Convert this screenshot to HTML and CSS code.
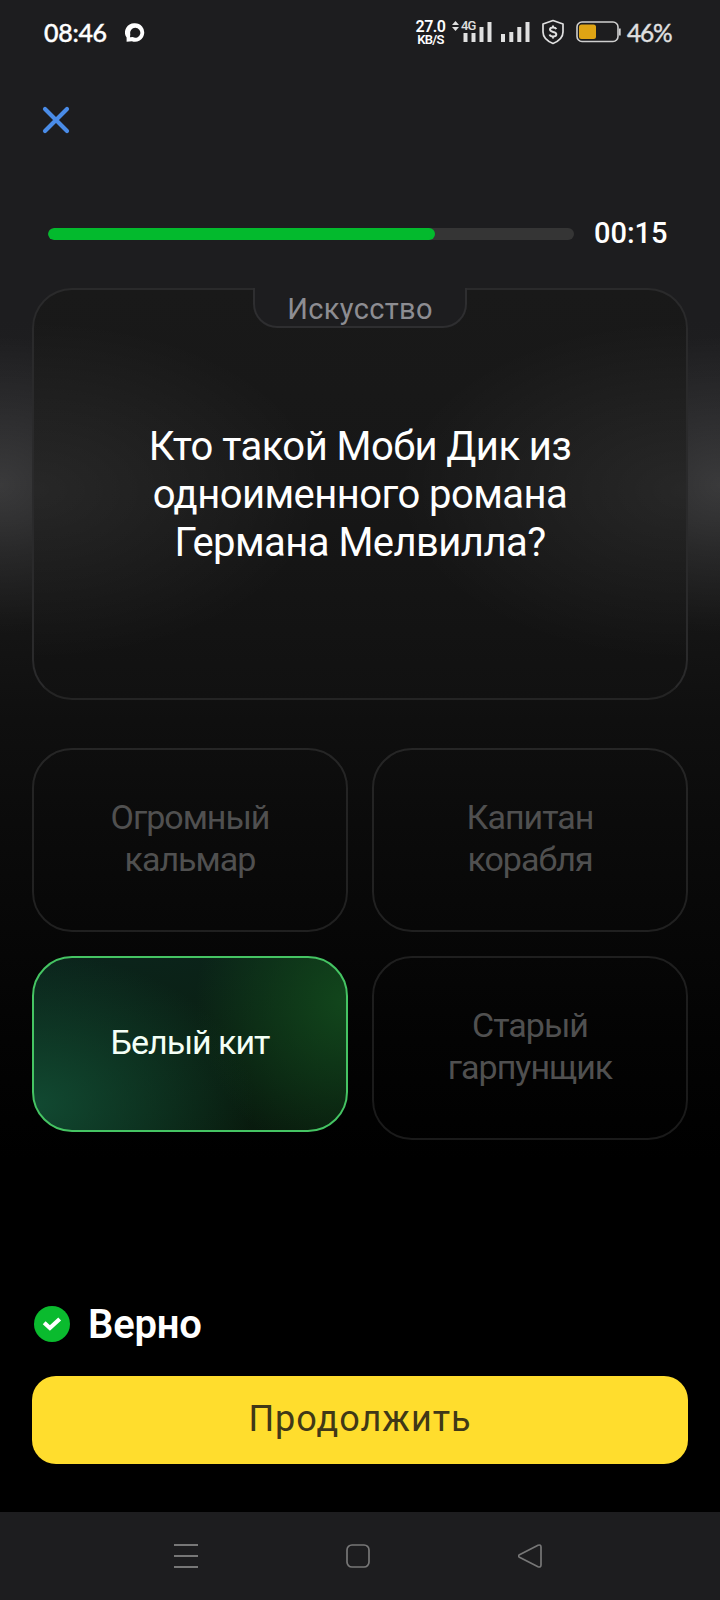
FILE: index.html
```html
<!DOCTYPE html>
<html lang="ru">
<head>
<meta charset="utf-8">
<title>Викторина</title>
<link rel="stylesheet" href="styles.css">
</head>
<body>
<div class="screen">
  <header class="status">
    <span class="clock">08:46</span>
    <svg class="chat" width="20" height="20" viewBox="0 0 20 20"><path fill="#fff" fill-rule="evenodd" d="M10 0.300a9.300 9.200 0 1 1-3.100 17.900L1.600 18.800V14.600A9.300 9.200 0 0 1 10 .3zM10.200 4.800a5 5 0 0 0-4.900 6.200l-.3 3.300 2.800-.2A5 5 0 1 0 10.200 4.800z"/></svg>
    <div class="speed"><span>27.0</span><span>KB/S</span></div>
    <div class="signal">
      <svg width="41" height="24" viewBox="0 0 41 24"><path fill="#e0e0e0" d="M0 5 3.500 1 7 5zM0 7l3.500 4L7 7zM11.500 13h4v9h-4zM19.500 13h4v9h-4zM27.500 7h4v15h-4zM35.500 2h4v20h-4z"/></svg>
      <span class="net">4G</span>
    </div>
    <svg class="bars" width="29" height="20" viewBox="0 0 29 20"><path fill="#e0e0e0" d="M0 12h4v8H0zM8.300 10h4v10h-4zM16.300 5h4v15h-4zM24.500 0h4v20h-4z"/></svg>
    <svg class="shield" width="24" height="26" viewBox="0 0 24 26"><path fill="none" stroke="#e0e0e0" stroke-width="1.700" stroke-linejoin="round" d="M12 1.500 22 5v8c0 5.500-4 9-10 11.500C6 22 2 18.500 2 13V5z"/><path fill="none" stroke="#e0e0e0" stroke-width="2" d="M15.300 10.200c-.5-1.200-1.600-1.700-3.300-1.700-1.800 0-3 .7-3 2.100 0 3.200 6.300 1.400 6.300 4.600 0 1.500-1.400 2.300-3.300 2.300-1.800 0-3-.7-3.400-2M12 6.500v2.200M12 17.300v2.200"/></svg>
    <svg class="battery" width="46" height="22" viewBox="0 0 46 22"><rect x="1" y="1" width="41" height="19.500" rx="5" fill="none" stroke="#cfcfcf" stroke-width="1.600"/><rect x="3" y="3.500" width="17" height="14.500" rx="2.500" fill="#dfa414"/><path d="M43.800 7.500v7" stroke="#cfcfcf" stroke-width="1.800"/></svg>
    <span class="percent">46%</span>
  </header>

  <button class="close" aria-label="Закрыть"><svg width="28" height="28" viewBox="0 0 28 28"><path d="M3 3 25 25M25 3 3 25" stroke="#4a8ce8" stroke-width="4.200" stroke-linecap="round"/></svg></button>

  <div class="timer">
    <div class="track"><div class="fill"></div></div>
    <span class="time">00:15</span>
  </div>

  <section class="question">
    <div class="topic"><span>Искусство</span></div>
    <p>Кто такой Моби Дик из<br>одноименного романа<br>Германа Мелвилла?</p>
  </section>

  <section class="answers">
    <div class="answer"><span>Огромный<br>кальмар</span></div>
    <div class="answer"><span>Капитан<br>корабля</span></div>
    <div class="answer correct"><span>Белый кит</span></div>
    <div class="answer"><span>Старый<br>гарпунщик</span></div>
  </section>

  <div class="result">
    <svg width="36" height="36" viewBox="0 0 36 36"><circle cx="18" cy="18" r="18" fill="#0abb2e"/><path d="M10.200 16.800 15.900 22 25.700 13" fill="none" stroke="#fff" stroke-width="4.200" stroke-linejoin="miter"/></svg>
    <span>Верно</span>
  </div>
  <button class="next"><span>Продолжить</span></button>

  <nav class="navbar">
    <svg width="24" height="24" viewBox="0 0 24 24"><path d="M0 1h24M0 12h24M0 23h24" stroke="#777" stroke-width="2"/></svg>
    <svg width="24" height="24" viewBox="0 0 24 24"><rect x="1" y="1" width="22" height="22" rx="5" fill="none" stroke="#777" stroke-width="1.700"/></svg>
    <svg width="24" height="24" viewBox="0 0 24 24"><path d="M1.500 10.800 20 1.300q3-1 3 1.700v18q0 2.700-3 1.700L1.500 13.200q-2-1.200 0-2.400z" fill="none" stroke="#777" stroke-width="1.700"/></svg>
  </nav>
</div>
</body>
</html>
```
FILE: styles.css
```css
* { box-sizing: border-box; }
body { margin: 0; background: #000; }
.screen {
  width: 720px;
  height: 1600px;
  display: flex;
  flex-direction: column;
  font-family: Roboto, "Noto Sans", sans-serif;
  color: #fff;
  background:
    radial-gradient(ellipse 180px 150px at 0 485px, rgba(255,255,255,.12), rgba(255,255,255,.06) 45%, transparent),
    radial-gradient(ellipse 180px 150px at 720px 485px, rgba(255,255,255,.12), rgba(255,255,255,.06) 45%, transparent),
    linear-gradient(#1d1d1f 0, #1d1d1f 320px, #202022 420px, #1e1e1f 520px, #151515 620px, #0f0f0f 720px, #080808 900px, #030303 1040px, #000 1160px);
}
button { border: 0; padding: 0; background: none; font: inherit; }
svg { display: block; flex: none; }

.status { display: flex; height: 64px; padding-left: 44px; align-items: center; font-family: Lato, sans-serif; }
.clock { width: 81px; font-size: 25px; font-weight: 500; letter-spacing: -.3px; -webkit-text-stroke: .4px #fff; }
.chat { margin-top: 1px; }
.speed { width: 31px; margin-left: 270px; padding-top: 2px; font-family: Roboto, sans-serif; font-weight: 600; text-align: center; white-space: nowrap; }
.speed span { display: block; font-size: 13px; line-height: 13px; letter-spacing: -.7px; }
.speed span:first-child { font-size: 16px; letter-spacing: -.5px; }
.signal { position: relative; margin-left: 6px; }
.net { position: absolute; left: 9px; top: -1px; font: 500 13px/14px Roboto, sans-serif; letter-spacing: -.8px; color: #e0e0e0; }
.bars { margin-left: 8px; }
.shield { margin-left: 11px; }
.battery { margin-left: 11px; }
.percent { margin-left: 5px; font-size: 24.500px; letter-spacing: -1.200px; color: #e0e0e0; -webkit-text-stroke: .4px #e0e0e0; }

.close { align-self: flex-start; margin: 42px 0 0 42px; }
.timer { display: flex; align-items: center; gap: 20px; height: 34px; margin: 82px 52px 0 48px; }
.track { width: 526px; height: 12px; margin-top: 2px; border-radius: 6px; background: #353535; overflow: hidden; }
.fill { width: 387px; height: 100%; border-radius: 6px; background: #03ba2d; }
.time { font-size: 29px; font-weight: 500; line-height: 34px; }

.question {
  display: flex;
  flex-direction: column;
  align-items: center;
  height: 412px;
  margin: 38px 32px 0;
  border: 2px solid #2a2a2b;
  border-bottom-color: #242424;
  border-radius: 40px;
  background:
    radial-gradient(ellipse 290px 170px at 0 200px, rgba(255,255,255,.07), transparent),
    radial-gradient(ellipse 290px 170px at 100% 200px, rgba(255,255,255,.07), transparent),
    linear-gradient(#191919, #171717 50%, #111);
}
.topic {
  width: 214px;
  height: 40px;
  margin-top: -2px;
  border: 2px solid #2e2e30;
  border-top: 0;
  border-radius: 0 0 24px 24px;
  background: #1d1d1f;
  color: #8d8d92;
  font-size: 29px;
  line-height: 42px;
  letter-spacing: .35px;
  text-align: center;
}
.question p { margin: 95px 0 0; font-size: 40px; line-height: 48px; letter-spacing: -.55px; text-align: center; }

.answers { display: grid; grid-template-columns: 316px 316px; gap: 24px; margin: 48px 32px 0; align-items: start; }
.answer {
  display: flex;
  align-items: center;
  justify-content: center;
  height: 184px;
  padding-bottom: 4px;
  border: 2px solid rgba(255,255,255,.1);
  border-radius: 40px;
  color: #505050;
  font-size: 34px;
  line-height: 42px;
  letter-spacing: -1px;
  text-align: center;
}
.correct {
  height: 176px;
  border-color: #45c463;
  color: #f4fff6;
  background:
    radial-gradient(ellipse 220px 150px at 0 85%, rgba(18,78,53,.9), transparent),
    radial-gradient(ellipse 150px 160px at 100% 25%, rgba(18,72,28,.95), transparent),
    linear-gradient(165deg, #0b241c, #0a2013 50%, #08190c);
}

.result { display: flex; align-items: center; gap: 18px; height: 48px; margin: 160px 34px 0; font-size: 40px; font-weight: 600; letter-spacing: -.2px; }
.next { height: 88px; margin: 28px 32px 0; border-radius: 24px; background: #ffdd2d; color: #403817; font-size: 36px; line-height: 86px; padding-bottom: 2px; letter-spacing: 1px; }
.navbar { display: flex; align-items: center; gap: 148px; height: 88px; margin-top: 48px; padding-left: 174px; background: #1d1d1f; }
```
